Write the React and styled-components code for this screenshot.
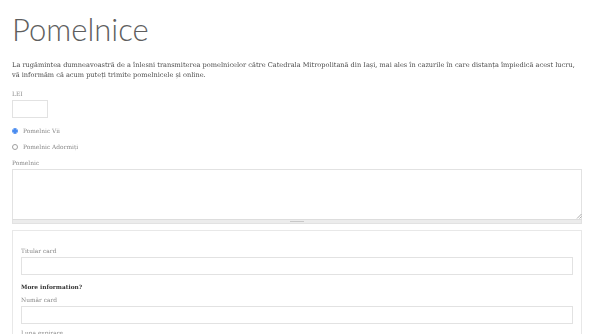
import React, { useState } from 'react';
import styled, { createGlobalStyle } from 'styled-components';

// Global

const GlobalStyle = createGlobalStyle`
  html, body {
    margin: 0;
    padding: 0;
    background: #fff;
  }
  body {
    font-family: 'DejaVu Serif', 'Liberation Serif', serif;
    color: #555;
  }
`;

// Layout

const Page = styled.div`
  padding: 9px 18px 0 12px;
  width: 570px;
`;

const Title = styled.h1`
  margin: 0;
  font-family: Lato, 'Open Sans', sans-serif;
  font-weight: 300;
  font-size: 31px;
  line-height: 40px;
  color: #5e5e5e;
`;

const Intro = styled.p`
  margin: 11px 0 0;
  font-size: 6.6px;
  line-height: 10px;
  color: #4a4a4a;
  filter: grayscale(1);
`;

const Field = styled.div`
  display: flex;
  flex-direction: column;
  margin-top: ${(p) => p.$top || 0}px;
`;

const Label = styled.label`
  display: block;
  font-size: 5.9px;
  line-height: 8px;
  color: #888;
  margin-bottom: 2px;
  filter: grayscale(1);
`;

const Input = styled.input`
  box-sizing: border-box;
  width: ${(p) => p.$width || '100%'};
  height: 18px;
  margin: 0;
  border: 1px solid #e2e2e2;
  background: #fff;
  outline: none;
  padding: 0 4px;
`;

const RadioList = styled.div`
  display: flex;
  flex-direction: column;
  gap: 8px;
  margin-top: 9px;
`;

const RadioRow = styled.label`
  display: flex;
  align-items: center;
  gap: 5px;
  height: 8px;
`;

const RadioText = styled.span`
  font-size: 5.9px;
  color: #888;
  filter: grayscale(1);
`;

const RadioDot = styled.input.attrs({ type: 'radio' })`
  appearance: none;
  box-sizing: border-box;
  width: 6px;
  height: 6px;
  margin: 0;
  border-radius: 50%;
  border: 1px solid #a0a0a0;
  background: #fff;

  &:checked {
    border-color: #4a8cf0;
    background: radial-gradient(circle, #4a8cf0 0 1.6px, #fff 1.8px);
  }
`;

const TextAreaWrap = styled.div`
  display: flex;
  flex-direction: column;
  width: 570px;
`;

const TextAreaBox = styled.div`
  position: relative;
`;

const TextArea = styled.textarea`
  box-sizing: border-box;
  width: 100%;
  height: 50px;
  margin: 0;
  border: 1px solid #e2e2e2;
  border-bottom: 0;
  outline: none;
  resize: none;
  display: block;
`;

const ResizeCorner = styled.svg`
  position: absolute;
  right: 0;
  bottom: 0;
`;

const Grippie = styled.div`
  position: relative;
  height: 3px;
  background: #ececec;
  border: 1px solid #e2e2e2;
  border-top-color: #ddd;

  &::after {
    content: '';
    position: absolute;
    left: 277px;
    top: 1px;
    width: 14px;
    height: 1px;
    background: #c8c8c8;
  }
`;

const Card = styled.div`
  box-sizing: border-box;
  width: 570px;
  margin-top: 6px;
  border: 1px solid #e8e8e8;
  border-bottom: 0;
  padding: 16px 8px 0 8px;
  height: 120px;
`;

const InfoLink = styled.div`
  margin-top: 8px;
  font-size: 5.8px;
  line-height: 8px;
  font-weight: bold;
  color: #333;
  filter: grayscale(1);
`;

// Main Component

function App() {
  const [kind, setKind] = useState('vii');

  return (
    <>
      <GlobalStyle />
      <Page>
        <Title>Pomelnice</Title>
        <Intro>
          La rugămintea dumneavoastră de a înlesni transmiterea pomelnicelor către Catedrala
          Mitropolitană din Iași, mai ales în cazurile în care distanța împiedică acest lucru,
          vă informăm că acum puteți trimite pomelnicele și online.
        </Intro>

        <Field $top={10}>
          <Label>LEI</Label>
          <Input $width="36px" />
        </Field>

        <RadioList>
          <RadioRow>
            <RadioDot name="kind" checked={kind === 'vii'} onChange={() => setKind('vii')} />
            <RadioText>Pomelnic Vii</RadioText>
          </RadioRow>
          <RadioRow>
            <RadioDot
              name="kind"
              checked={kind === 'adormiti'}
              onChange={() => setKind('adormiti')}
            />
            <RadioText>Pomelnic Adormiți</RadioText>
          </RadioRow>
        </RadioList>

        <Field $top={8}>
          <Label>Pomelnic</Label>
          <TextAreaWrap>
            <TextAreaBox>
              <TextArea />
              <ResizeCorner width="6" height="6" viewBox="0 0 6 6">
                <path d="M5.5 1 L1 5.5 M5.5 3.5 L3.5 5.5" stroke="#999" strokeWidth="0.8" />
              </ResizeCorner>
            </TextAreaBox>
            <Grippie />
          </TextAreaWrap>
        </Field>

        <Card>
          <Field>
            <Label>Titular card</Label>
            <Input />
          </Field>
          <InfoLink>More information?</InfoLink>
          <Field $top={5}>
            <Label>Număr card</Label>
            <Input />
          </Field>
          <Field $top={5}>
            <Label>Luna expirare</Label>
          </Field>
        </Card>
      </Page>
    </>
  );
}

export default App;
